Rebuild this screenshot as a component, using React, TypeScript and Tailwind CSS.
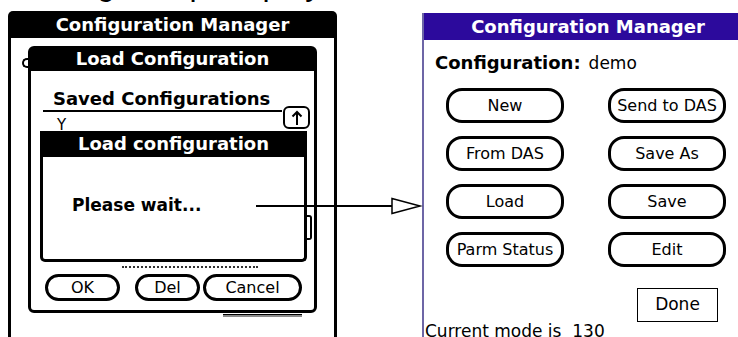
import { ReactNode } from "react";

const PalmButton = ({ label, w }: { label: string; w: string }) => (
  <div
    className={`${w} h-[27px] border-[3px] border-black rounded-full flex items-center justify-center text-[16px] leading-none`}
  >
    {label}
  </div>
);

const MenuButton = ({ children }: { children: ReactNode }) => (
  <div className="w-[118px] h-[35px] border-[3px] border-black rounded-[16px] flex items-center justify-center text-[16px] leading-none">
    {children}
  </div>
);

const LeftScreen = () => (
  <div className="ml-2 w-[329px] h-[326px] shrink-0 flex flex-col">
    {/* title of the screen behind */}
    <div className="h-[27px] bg-black rounded-t-[5px] text-white font-bold text-[18px] leading-[27px] text-center">
      Configuration Manager
    </div>
    <div className="relative flex-1 border-x-[3px] border-black">
      {/* button peeking from behind the dialog */}
      <div className="absolute left-[11px] top-[20px] w-[8px] h-[10px] border-l-2 border-y-2 border-black rounded-l-full" />

      {/* Load Configuration dialog */}
      <div className="relative ml-[17px] mt-[8px] w-[289px] h-[267px] border-[3px] border-black rounded-[6px] bg-white flex flex-col">
        <div className="h-[23px] -mt-px bg-black text-white font-bold text-[18px] leading-[22px] text-center">
          Load Configuration
        </div>
        <div className="mt-[18px] pl-[22px] font-bold text-[18px] leading-[20px]">
          Saved Configurations
        </div>
        <div className="-mt-[3px] flex items-start">
          <div className="flex flex-col">
            <div className="ml-[12px] mt-[4px] w-[239px] h-[2px] bg-black" />
            <div className="h-[19px] overflow-hidden pl-[26px] pt-[4px] text-[15px] leading-[18px]">
              Y
            </div>
          </div>
          <div className="ml-[1px] w-[27px] h-[23px] border-2 border-black rounded-[6px] flex items-center justify-center">
            <svg width="12" height="16" viewBox="0 0 12 16">
              <path d="M6 15V2M1.5 6.5L6 2l4.5 4.5" stroke="#000" strokeWidth="2" fill="none" />
            </svg>
          </div>
        </div>

        {/* Load configuration progress dialog */}
        <div className="ml-[9px] w-[267px] h-[131px] flex flex-col">
          <div className="h-[26px] bg-black text-white font-bold text-[18px] leading-[26px] text-center">
            Load configuration
          </div>
          <div className="flex-1 border-[3px] border-t-0 border-black rounded-b-[5px] bg-white flex items-center pl-[29px] pb-[5px] font-bold text-[17px]">
            Please wait...
          </div>
        </div>

        {/* scroll-down remnant */}
        <div className="absolute left-[276px] top-[166px] w-[5px] h-[25px] border-2 border-l-0 border-black rounded-r-[3px]" />

        <div className="ml-[91px] mt-[4px] w-[136px] border-t-2 border-dotted border-[#333]" />

        <div className="mt-[6px] ml-[14px] flex">
          <PalmButton label="OK" w="w-[75px]" />
          <div className="ml-[15px]">
            <PalmButton label="Del" w="w-[65px]" />
          </div>
          <div className="ml-[3px]">
            <PalmButton label="Cancel" w="w-[99px]" />
          </div>
        </div>
      </div>
      <div className="ml-[212px] mt-[1px] w-[79px] h-[3px] border-t border-black bg-[#8a8a8a]" />
    </div>
  </div>
);

const RightScreen = () => (
  <div className="ml-[85px] mt-[2px] w-[330px] h-[324px] shrink-0 border-l-2 border-[#6d66a6] bg-white flex flex-col">
    <div className="h-[27px] shrink-0 bg-[#2c0a9c] text-white font-bold text-[18px] leading-[27px] text-center">
      Configuration Manager
    </div>
    <div className="mt-[13px] pl-[11px] flex items-baseline gap-[8px] leading-[20px]">
      <span className="font-bold text-[18px]">Configuration:</span>
      <span className="text-[17px]">demo</span>
    </div>
    <div className="mt-[15px] pl-[22px] grid grid-cols-[118px_118px] gap-x-[44px] gap-y-[13px]">
      <MenuButton>New</MenuButton>
      <MenuButton>Send to DAS</MenuButton>
      <MenuButton>From DAS</MenuButton>
      <MenuButton>Save As</MenuButton>
      <MenuButton>Load</MenuButton>
      <MenuButton>Save</MenuButton>
      <MenuButton>Parm Status</MenuButton>
      <MenuButton>Edit</MenuButton>
    </div>
    <div className="mt-[21px] ml-[213px] w-[81px] h-[34px] shrink-0 border-[1.5px] border-black flex items-center justify-center text-[17px]">
      Done
    </div>
    <div className="mt-[-1px] shrink-0 pl-[1px] text-[17px] leading-[20px] whitespace-pre">
      Current mode is  130
    </div>
  </div>
);

export default function App() {
  return (
    <div className="relative w-[738px] h-[337px] overflow-hidden bg-white text-black font-['DejaVu_Sans',sans-serif]">
      {/* caption above, cut off by the crop */}
      <div className="h-[11px] overflow-hidden">
        <div className="-mt-[32px] pl-[1px] font-['Liberation_Sans',sans-serif] text-[32px] leading-[32px] whitespace-nowrap">
          Loading Setup Display
        </div>
      </div>

      <div className="flex items-start">
        <LeftScreen />
        <RightScreen />
      </div>

      {/* arrow from the wait message to the resulting screen */}
      <svg
        className="absolute left-[250px] top-[195px]"
        width="175"
        height="22"
        viewBox="0 0 175 22"
      >
        <line x1="6" y1="11" x2="142" y2="11" stroke="#000" strokeWidth="2" />
        <polygon points="142,3.5 170,11 142,18.5" fill="#fff" stroke="#000" strokeWidth="1.5" />
      </svg>
    </div>
  );
}
